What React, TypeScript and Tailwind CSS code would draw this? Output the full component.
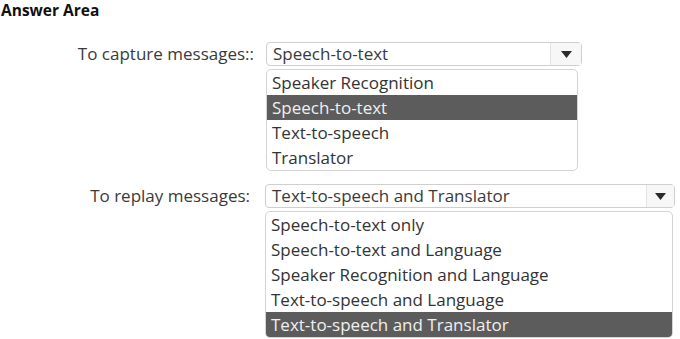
import React from "react";

function Arrow() {
  return (
    <svg width="11" height="7" viewBox="0 0 11 7">
      <path d="M0 0 L11 0 L5.5 7 Z" fill="#2b2b2b" />
    </svg>
  );
}

function Select({ value, width, btnW }: { value: string; width: string; btnW: string }) {
  return (
    <div className={`flex h-[24px] ${width} rounded-[4px] border border-[#cfcfcf] bg-white`}>
      <div className="flex-1 pl-[6px] leading-[22px] text-[#3a3a3a]">{value}</div>
      <div className={`flex ${btnW} items-center justify-center border-l border-[#e4e4e4] bg-[#f7f7f7]`}>
        <Arrow />
      </div>
    </div>
  );
}

function List({ items, sel, width }: { items: string[]; sel: number; width: string }) {
  return (
    <div className={`flex flex-col ${width} overflow-hidden rounded-[5px] border border-[#d4d4d4] bg-white`}>
      {items.map((it, i) => (
        <div
          key={it}
          className={`h-[25px] pl-[5px] leading-[25px] ${i === sel ? "bg-[#5c5c5c] text-[#f0f0f0]" : "text-[#333333]"}`}
        >
          {it}
        </div>
      ))}
    </div>
  );
}

export default function App() {
  return (
    <div className="h-[339px] w-[680px] bg-white text-[17px] text-[#3a3a3a]" style={{ fontFamily: '"Open Sans", "Noto Sans", sans-serif' }}>
      <div className="pl-[1px] text-[15.5px] font-bold leading-[21px] text-[#111]">Answer Area</div>
      <div className="mt-[21px] flex">
        <div className="w-[255px] pr-[1px] text-right leading-[24px]">To capture messages::</div>
        <div className="ml-[11px] flex flex-col gap-[3px]">
          <Select value="Speech-to-text" width="w-[316px]" btnW="w-[31px]" />
          <List items={["Speaker Recognition", "Speech-to-text", "Text-to-speech", "Translator"]} sel={1} width="w-[312px]" />
        </div>
      </div>
      <div className="mt-[13px] flex">
        <div className="w-[250px] text-right leading-[24px]">To replay messages:</div>
        <div className="ml-[15px] flex flex-col gap-[3px]">
          <Select value="Text-to-speech and Translator" width="w-[410px]" btnW="w-[28px]" />
          <List
            items={[
              "Speech-to-text only",
              "Speech-to-text and Language",
              "Speaker Recognition and Language",
              "Text-to-speech and Language",
              "Text-to-speech and Translator",
            ]}
            sel={4}
            width="w-[408px]"
          />
        </div>
      </div>
    </div>
  );
}
